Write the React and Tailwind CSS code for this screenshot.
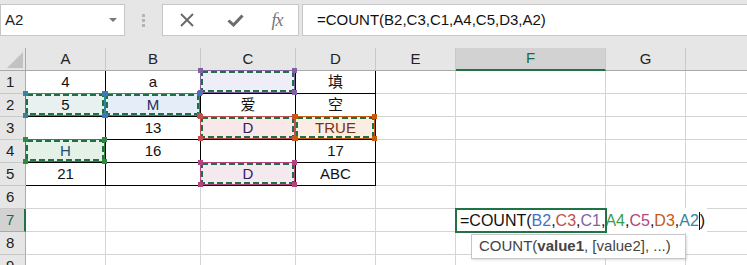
import React from 'react'

const cols = [
  { k: 'A', w: 80 },
  { k: 'B', w: 95 },
  { k: 'C', w: 95 },
  { k: 'D', w: 80 },
  { k: 'E', w: 80 },
  { k: 'F', w: 150 },
  { k: 'G', w: 80 },
  { k: 'H', w: 120 },
]

const data = {
  A1: '4', B1: 'a', D1: '填',
  A2: '5', B2: 'M', C2: '爱', D2: '空',
  B3: '13', C3: 'D', D3: 'TRUE',
  A4: 'H', B4: '16', D4: '17',
  A5: '21', C5: 'D', D5: 'ABC',
}

const textColors = {
  D3: 'text-[#7a3210]',
  A4: 'text-[#1d4f73]',
  B2: 'text-[#1c2f5e]',
  C3: 'text-[#2b2560]',
  C5: 'text-[#2b2560]',
}

// reference highlight colours used while the formula is being edited
const refs = {
  A2: { fill: 'bg-[#e8f0f0]', line: '#31859c' },
  B2: { fill: 'bg-[#e5edf8]', line: '#4472c4' },
  C1: { fill: 'bg-[#efedf7]', line: '#8064a2' },
  A4: { fill: 'bg-[#e4f1e7]', line: '#2e8b3e' },
  C3: { fill: 'bg-[#f8e8e8]', line: '#c0504d' },
  C5: { fill: 'bg-[#f5e9f0]', line: '#b4447f' },
  D3: { fill: 'bg-[#fbede3]', line: '#c55a11' },
}

function RefOverlay({ fill, line }) {
  return (
    <div className={`absolute -left-px -top-px w-[calc(100%+1px)] h-[calc(100%+1px)] z-10 ${fill}`} style={{ border: `1px solid ${line}` }}>
      <svg className="absolute inset-0 w-full h-full overflow-visible">
        <rect x="1" y="1" fill="none" stroke="#1e7145" strokeWidth="2" strokeDasharray="6 3" style={{ width: 'calc(100% - 2px)', height: 'calc(100% - 2px)' }} />
      </svg>
      <span className="absolute -left-[3px] -top-[3px] w-[5px] h-[5px]" style={{ background: line }} />
      <span className="absolute -right-[3px] -top-[3px] w-[5px] h-[5px]" style={{ background: line }} />
      <span className="absolute -left-[3px] -bottom-[3px] w-[5px] h-[5px]" style={{ background: line }} />
      <span className="absolute -right-[3px] -bottom-[3px] w-[5px] h-[5px]" style={{ background: line }} />
    </div>
  )
}

function Toolbar() {
  return (
    <div className="h-[48px] flex items-start pt-[4px] bg-[#e6e6e6]">
      <div className="w-[125px] h-[32px] bg-white border border-[#c6c6c6] flex items-center justify-between pl-[4px] pr-[7px]">
        <span className="text-[15px] text-[#222]">A2</span>
        <span className="w-0 h-0 border-l-[4px] border-r-[4px] border-t-[4px] border-l-transparent border-r-transparent border-t-[#777]" />
      </div>
      <div className="w-[37px] h-[32px] flex flex-col items-center justify-center gap-[2px]">
        <span className="w-[3px] h-[3px] bg-[#b4b4b4]" />
        <span className="w-[3px] h-[3px] bg-[#b4b4b4]" />
        <span className="w-[3px] h-[3px] bg-[#b4b4b4]" />
      </div>
      <div className="w-[137px] h-[32px] bg-white border border-[#c6c6c6] flex items-center">
        <div className="w-[48px] flex justify-center">
          <svg width="14" height="14" viewBox="0 0 14 14">
            <path d="M1 1L13 13M13 1L1 13" stroke="#6b6b6b" strokeWidth="2" />
          </svg>
        </div>
        <div className="w-[48px] flex justify-center">
          <svg width="17" height="13" viewBox="0 0 17 13">
            <path d="M1.5 6.5L6.5 11L15.5 1.5" stroke="#6b6b6b" strokeWidth="3" fill="none" />
          </svg>
        </div>
        <div className="w-[36px] flex justify-center">
          <span className="font-['Liberation_Serif'] italic text-[18px] text-[#777] tracking-[-1px]">fx</span>
        </div>
      </div>
      <div className="ml-[3px] flex-1 h-[32px] bg-white border-y border-l border-[#c6c6c6] flex items-center pl-[14px]">
        <span className="text-[15px] text-[#111]">=COUNT(B2,C3,C1,A4,C5,D3,A2)</span>
      </div>
    </div>
  )
}

function HeaderRow() {
  return (
    <div className="flex h-[23px] border-b border-[#ababab] bg-[#e6e6e6]">
      <div className="w-[26px] shrink-0 border-r border-[#ababab] relative">
        <svg className="absolute right-[2px] bottom-[2px]" width="16" height="16" viewBox="0 0 16 16">
          <path d="M16 0L16 16L0 16Z" fill="#c2c2c2" />
        </svg>
      </div>
      {cols.map(c => (
        <div
          key={c.k}
          style={{ width: c.w }}
          className={`shrink-0 flex items-center justify-center text-[15px] border-r border-[#c9c9c9] ${c.k === 'F' ? 'bg-[#d2d2d2] text-[#1e6b42] border-b-2 border-b-[#217346] -mb-px' : 'text-[#222]'}`}
        >
          {c.k === 'H' ? '' : c.k}
        </div>
      ))}
    </div>
  )
}

function Row({ n }) {
  const active = n === 7
  return (
    <div className="flex h-[23px]">
      <div className={`w-[26px] shrink-0 flex items-center pl-[6px] text-[15px] border-b ${active ? 'bg-[#d2d2d2] text-[#1e6b42] border-r-2 border-r-[#217346] border-b-[#ababab]' : 'bg-[#e6e6e6] text-[#222] border-r border-r-[#ababab] border-b-[#c9c9c9]'}`}>
        {n}
      </div>
      {cols.map((c, i) => {
        const id = c.k + n
        const inTable = i < 4 && n <= 5
        const ref = refs[id]
        return (
          <div
            key={id}
            style={{ width: c.w }}
            className={`shrink-0 relative border-r border-b flex items-center justify-center pt-[1px] text-[15px] ${inTable ? 'border-black' : 'border-[#d4d4d4]'} ${n === 5 && i < 4 ? 'border-b-black' : ''} ${i === 3 && n <= 5 ? 'border-r-black' : ''}`}
          >
            {ref && <RefOverlay {...ref} />}
            <span className={`relative z-20 ${textColors[id] || 'text-[#111]'}`}>{data[id] || ''}</span>
          </div>
        )
      })}
    </div>
  )
}

function Editor() {
  const parts = [
    ['=COUNT(', '#111'],
    ['B2', '#4472c4'],
    [',', '#111'],
    ['C3', '#c0504d'],
    [',', '#111'],
    ['C1', '#8064a2'],
    [',', '#111'],
    ['A4', '#3e9a4a'],
    [',', '#111'],
    ['C5', '#b4447f'],
    [',', '#111'],
    ['D3', '#c55a11'],
    [',', '#111'],
    ['A2', '#31859c'],
  ]
  return (
    <>
      <div className="absolute left-[455px] top-[208px] w-[252px] h-[25px] bg-white z-30 flex items-center pl-[5px]">
        <span className="text-[16px] whitespace-nowrap flex items-center">
          {parts.map((p, i) => (
            <span key={i} style={{ color: p[1] }}>{p[0]}</span>
          ))}
          <span className="w-px h-[18px] bg-[#111]" />
          <span className="text-[#111]">)</span>
        </span>
      </div>
      <div className="absolute left-[455px] top-[208px] w-[152px] h-[25px] border-2 border-[#217346] z-40" />
      <div className="absolute left-[471px] top-[234px] w-[215px] h-[25px] bg-white border border-[#c6c6c6] shadow-[1px_1px_2px_rgba(0,0,0,0.15)] z-40 flex items-center pl-[7px]">
        <span className="text-[15px] text-[#444] whitespace-nowrap">
          COUNT(<span className="font-bold">value1</span>, [value2], ...)
        </span>
      </div>
    </>
  )
}

export default function App() {
  return (
    <div className="w-[747px] h-[265px] overflow-hidden relative bg-white font-['Liberation_Sans','Noto_Sans_CJK_SC',sans-serif]">
      <Toolbar />
      <HeaderRow />
      {[1, 2, 3, 4, 5, 6, 7, 8, 9].map(n => (
        <Row key={n} n={n} />
      ))}
      <Editor />
    </div>
  )
}
